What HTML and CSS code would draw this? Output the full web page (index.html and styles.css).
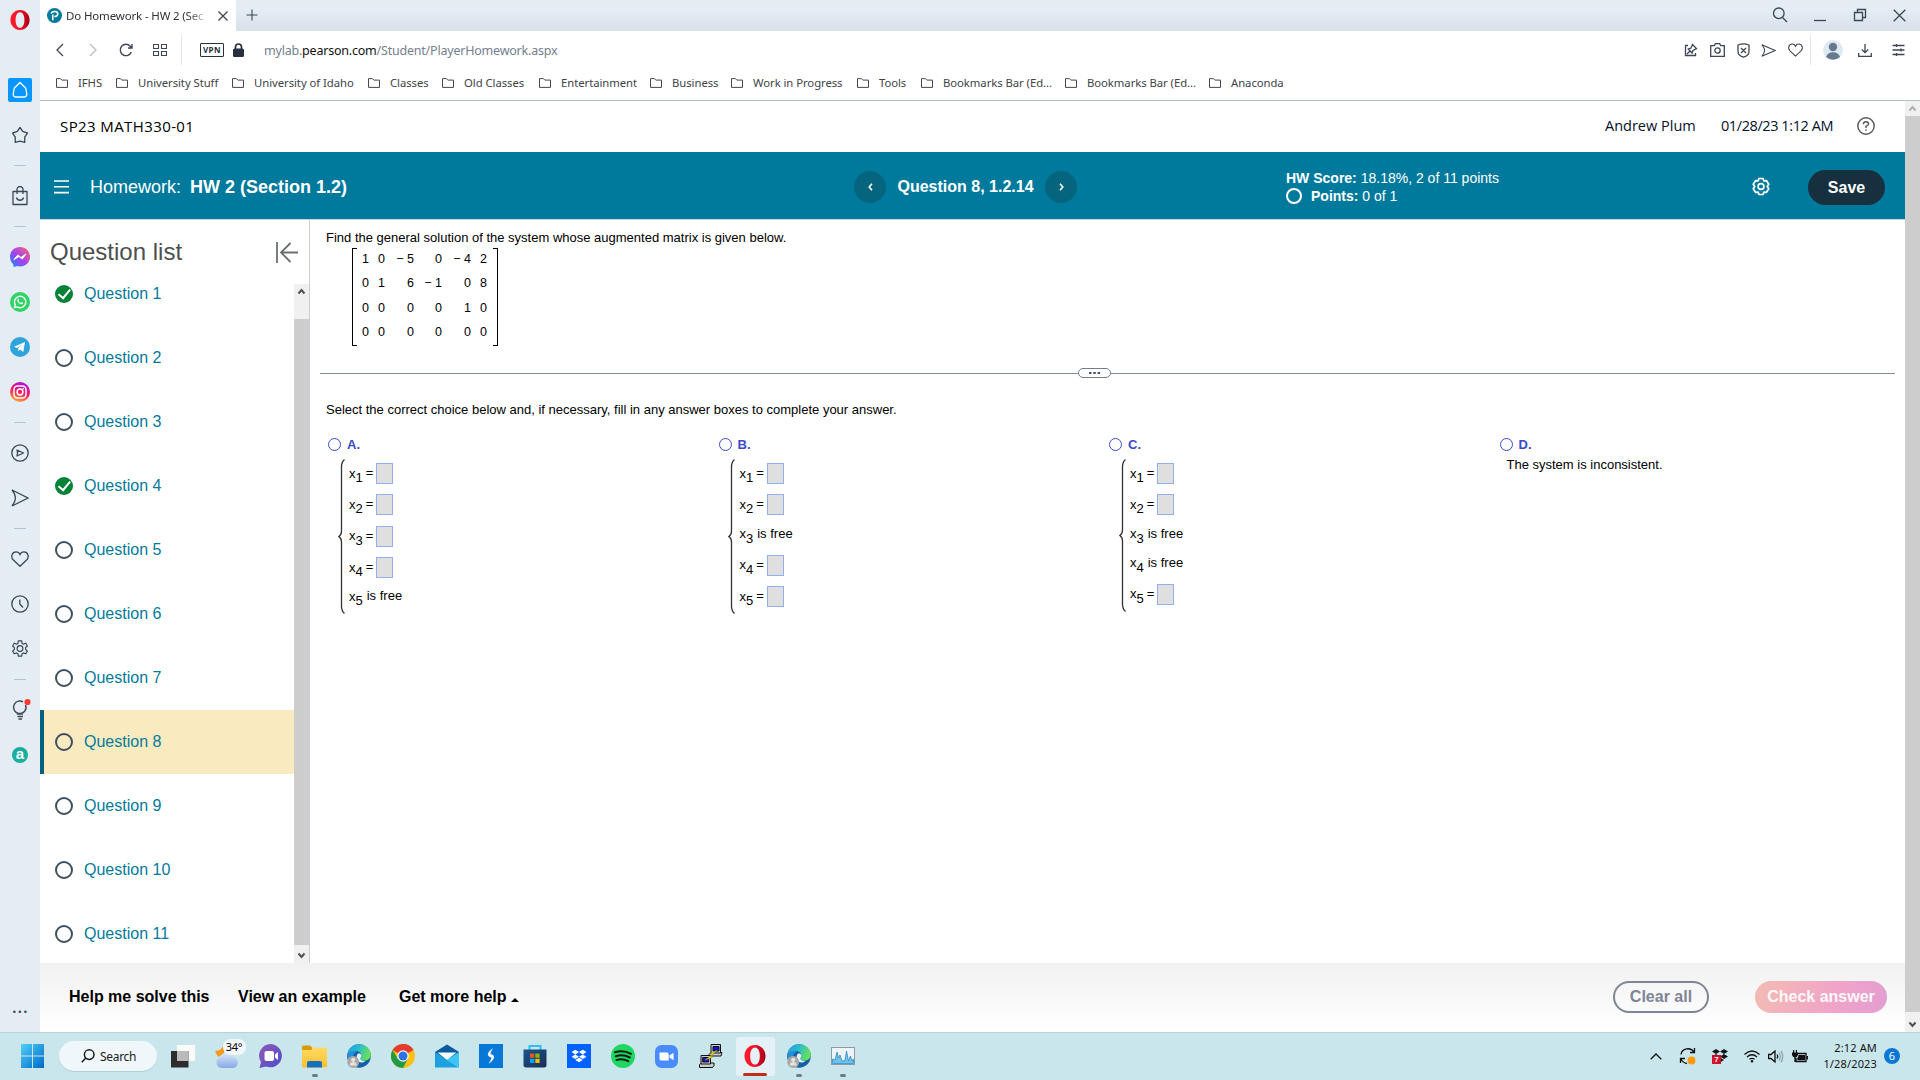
FILE: index.html
```html
<!DOCTYPE html>
<html lang="en">
<head>
<meta charset="utf-8">
<title>Do Homework - HW 2 (Section 1.2)</title>
<link rel="stylesheet" href="styles.css">
</head>
<body>
<svg class="defs" aria-hidden="true">
  <defs>
    <linearGradient id="gOpera" x1="0" x2="1"><stop offset="0" stop-color="#ff1b2d"/><stop offset=".5" stop-color="#f01528"/><stop offset="1" stop-color="#a70014"/></linearGradient>
    <linearGradient id="gMsg" x1="0" y1="1" x2="1" y2="0"><stop offset="0" stop-color="#0a94ff"/><stop offset=".45" stop-color="#a040f8"/><stop offset="1" stop-color="#ff6968"/></linearGradient>
    <linearGradient id="gInsta" x1=".7" y1="0" x2=".3" y2="1"><stop offset="0" stop-color="#a010f0"/><stop offset=".5" stop-color="#ff1560"/><stop offset="1" stop-color="#ffb030"/></linearGradient>
    <linearGradient id="gWin" x1="0" y1="0" x2="1" y2="1"><stop offset="0" stop-color="#4fd0f8"/><stop offset="1" stop-color="#0068c8"/></linearGradient>
    <linearGradient id="gEdge" x1="0" y1="0" x2="1" y2=".3"><stop offset="0" stop-color="#1f9be0"/><stop offset=".5" stop-color="#28bdd0"/><stop offset="1" stop-color="#65e05a"/></linearGradient>
    <linearGradient id="gChat" x1="0" y1="0" x2="1" y2="1"><stop offset="0" stop-color="#9358b8"/><stop offset="1" stop-color="#4a4fc8"/></linearGradient>
    <linearGradient id="gFold" x1="0" y1="0" x2="0" y2="1"><stop offset="0" stop-color="#ffdb66"/><stop offset="1" stop-color="#fcc02c"/></linearGradient>
    <linearGradient id="gCloud" x1="0" y1="0" x2="0" y2="1"><stop offset="0" stop-color="#d8e8fb"/><stop offset="1" stop-color="#87a9e6"/></linearGradient>
    <linearGradient id="gStore" x1="0" y1="0" x2="1" y2="1"><stop offset="0" stop-color="#17558e"/><stop offset="1" stop-color="#1d2d55"/></linearGradient>
    <symbol id="folder" viewBox="0 0 12 10"><path d="M.5 .6H4.4L5.8 2.1H11.5V9.4H.5Z" fill="none" stroke="#45484c"/></symbol>
    <symbol id="opera" viewBox="0 0 20 20"><path fill="url(#gOpera)" fill-rule="evenodd" d="M10 0C15.4 0 19.6 4.4 19.6 10S15.4 20 10 20 .4 15.600 .4 10 4.600 0 10 0ZM10 2.200C7.200 2.200 5.600 5.400 5.600 10S7.200 17.800 10 17.800 14.400 14.600 14.400 10 12.800 2.200 10 2.200Z"/></symbol>
    <symbol id="edge" viewBox="0 0 24 24"><circle cx="12" cy="12" r="11.800" fill="#1660a8"/><path d="M.4 11C1 4.500 6 .2 12 .2c6.500 0 11.800 4.600 11.800 10.200 0 4-3 6.200-6.300 6.200-2.600 0-4.200-1-4.200-2.200 0-1 1.200-1.500 1.200-3C14.500 9 12 7 8.800 7 5 7 1.500 9 .4 11Z" fill="url(#gEdge)"/><path d="M14.500 11.400c0 1.500-1.200 2-1.200 3 0 1.800 2.700 2.700 5.200 2.300-1.700 1.700-4 2.300-6 1.300C9.500 16.500 8.500 12 11 9.500c1.500-.2 3.500.4 3.500 1.900Z" fill="#e4f4f8"/><path d="M.3 11.500C2 8 6.200 6 10 7.200 5.500 8.500 5 16 8.500 19.500L5 21.500C1.500 19 0 15.500.3 11.500Z" fill="#268fd8"/><circle cx="6.200" cy="18" r="6" fill="#a9a9a9"/><circle cx="6.200" cy="15.800" r="2.100" fill="#e8e2dc"/><path d="M2.600 21.500c0-4.600 7.200-4.600 7.200 0Z" fill="#e8e2dc"/></symbol>
    <symbol id="dbx" viewBox="0 0 16 14"><path d="M4 0 8 2.500 4 5 0 2.500ZM12 0 16 2.500 12 5 8 2.500ZM4 5 8 7.500 4 10 0 7.500ZM12 5 16 7.500 12 10 8 7.500ZM8 8.500 12 11 8 13.500 4 11Z"/></symbol>
    <symbol id="plane" viewBox="0 0 18 18"><path d="M1 1 17 9 1 17C5.500 11 5.500 7 1 1Z"/></symbol>
    <symbol id="heart" viewBox="0 0 18 16"><path d="M9 15.300 2.400 9C-.6 6 1 .8 5 .8 7 .8 8.400 2 9 3.400 9.600 2 11 .8 13 .8 17 .8 18.600 6 15.600 9Z"/></symbol>
    <symbol id="gear" viewBox="0 0 20 20"><path d="M8.200 1h3.600l.5 2.700 1.600.9 2.500-1 1.800 3.100-2 1.800v2l2 1.800-1.800 3.100-2.500-1-1.600.9-.5 2.700H8.200l-.5-2.700-1.600-.9-2.500 1-1.800-3.100 2-1.800v-2l-2-1.800 1.800-3.100 2.500 1 1.600-.9Z"/><circle cx="10" cy="9.500" r="3.200"/></symbol>
  </defs>
</svg>
<div class="window">
  <aside class="rail">
    <div class="rail-top"><svg width="20" height="20"><use href="#opera"/></svg></div>
    <div class="ri"><span class="home"><svg class="ln" width="16" height="18" viewBox="0 0 16 18" ><path d="M2.200 7.200 8 1.500 13.800 7.200 14.800 13.500Q14.600 16 12.200 16H3.800Q1.400 16 1.200 13.500Z" stroke="#fff"/></svg></span></div>
    <div class="ri"><svg class="ln" width="18" height="18" viewBox="0 0 18 18"><path d="M9 1.500 11.700 5.300 16.500 7.200 13.700 11.200 13.800 16.300 9 15.200 4.200 16.300 4.300 11.200 1.500 7.200 6.300 5.300Z" stroke-linejoin="round"/></svg></div>
    <div class="sep"></div>
    <div class="ri"><svg class="ln" width="18" height="20" viewBox="0 0 18 20"><path d="M2 5.500H16V18.500H2ZM6 8V3.500a3 3 0 0 1 6 0V8M5.500 11.500a3.600 3.600 0 0 0 7 0" stroke-linejoin="round"/></svg></div>
    <div class="sep"></div>
    <div class="ri"><svg width="20" height="20" viewBox="0 0 20 20"><path d="M10 0c5.700 0 10 4.200 10 9.700S15.700 19.400 10 19.400c-1 0-2-.1-3-.4L3.500 20 3.300 17.200C1.200 15.400 0 12.800 0 9.700 0 4.200 4.300 0 10 0Z" fill="url(#gMsg)"/><path d="M4 12.500 7.800 8 11 10.500 16 7 12.200 12 9 9.500Z" fill="#fff" stroke="#fff" stroke-linejoin="round"/></svg></div>
    <div class="ri"><svg width="20" height="20" viewBox="0 0 20 20"><circle cx="10" cy="10" r="10" fill="#2fd366"/><path d="M4.400 15.600 5.200 12.800A5.700 5.700 0 1 1 7.300 14.900Z" fill="none" stroke="#fff" stroke-width="1.400"/><path d="M7.500 7.200c.8-1 1.200-.3 1.600.8.100.4-.6.700-.4 1.100.5.900 1.200 1.500 2.100 1.900.4.100.7-.9 1.100-.7 1.200.5 1.500.7.900 1.500-1.500 1.800-6.600-2-5.300-4.600Z" fill="#fff"/></svg></div>
    <div class="ri"><svg width="20" height="20" viewBox="0 0 20 20"><circle cx="10" cy="10" r="10" fill="#2fa3dc"/><path d="M4 9.800 15 5 13.300 15 10 12.500 8.500 14.200 8 11.200 12.500 7.500 7 10.900Z" fill="#fff"/></svg></div>
    <div class="ri"><svg width="20" height="20" viewBox="0 0 20 20"><circle cx="10" cy="10" r="10" fill="url(#gInsta)"/><g fill="none" stroke="#fff" stroke-width="1.500"><rect x="4" y="4" width="12" height="12" rx="3.500"/><circle cx="10" cy="10" r="2.900"/></g><circle cx="13.400" cy="6.600" r=".9" fill="#fff"/></svg></div>
    <div class="sep"></div>
    <div class="ri"><svg class="ln" width="18" height="18" viewBox="0 0 18 18"><circle cx="9" cy="9" r="8.200"/><path d="M6 6 12.500 9 6 12Q7.200 9 6 6Z" stroke-linejoin="round"/></svg></div>
    <div class="ri"><svg class="ln" width="18" height="18"><use href="#plane"/></svg></div>
    <div class="sep"></div>
    <div class="ri"><svg class="ln" width="18" height="16"><use href="#heart"/></svg></div>
    <div class="ri"><svg class="ln" width="18" height="18" viewBox="0 0 18 18"><circle cx="9" cy="9" r="8.200"/><path d="M8.800 4.500V9L12 12.500"/></svg></div>
    <div class="ri"><svg class="ln" width="18" height="18"><use href="#gear"/></svg></div>
    <div class="sep"></div>
    <div class="ri"><svg width="22" height="24" viewBox="0 0 22 24"><g fill="none" stroke="#3d4654" stroke-width="1.400"><path d="M14 3.800A6.300 6.300 0 1 0 15.700 13.300 6.300 6.300 0 0 0 16.500 7M8.500 14.500V16H14M8.500 18.500H14M9.500 21H13"/></g><circle cx="18.500" cy="4" r="3.100" fill="#ff3b30"/></svg></div>
    <div class="ri"><span class="badge-a">a</span></div>
    <div class="rail-more">•••</div>
  </aside>
  <div class="browser">
    <div class="tabs">
      <div class="tab"><svg width="15" height="15" viewBox="0 0 15 15"><circle cx="7.500" cy="7.500" r="7.500" fill="#047a9c"/><path d="M5.800 12.300V6.500M4 5.300Q5.200 3.200 8 3.400 11 3.700 10.800 6.200 10.500 8.600 7.300 8.500" fill="none" stroke="#fff" stroke-width="1.500"/></svg><span class="tab-title">Do Homework - HW 2 (Sec</span><svg class="ln" width="10" height="10" viewBox="0 0 10 10"><path d="M.5 .5 9.500 9.500M9.500 .5 .5 9.500"/></svg></div>
      <svg class="ln plus" width="12" height="12" viewBox="0 0 12 12"><path d="M6 .5V11.500M.5 6H11.500" stroke-width="1.100"/></svg>
      <div class="wctl">
        <svg class="ln" width="16" height="16" viewBox="0 0 16 16"><circle cx="6.800" cy="6.300" r="5.300"/><path d="M10.500 10.500 15 15"/></svg>
        <svg class="ln" width="12" height="16" viewBox="0 0 12 16"><path d="M0 13.500H12"/></svg>
        <svg class="ln" width="14" height="14" viewBox="0 0 14 14"><path d="M1.500 4.500H9.500V12.500H1.500ZM4.500 4.500V1.500H12.500V9.500H9.500"/></svg>
        <svg class="ln" width="13" height="13" viewBox="0 0 13 13"><path d="M.7 .7 12.300 12.300M12.300 .7 .7 12.300"/></svg>
      </div>
    </div>
    <div class="address">
      <div class="nav">
        <svg class="ln" width="8" height="14" viewBox="0 0 8 14"><path d="M7 1 1 7 7 13"/></svg>
        <svg class="ln dim" width="8" height="14" viewBox="0 0 8 14"><path d="M1 1 7 7 1 13"/></svg>
        <svg class="ln" width="14" height="14" viewBox="0 0 14 14"><path d="M12.300 9A5.700 5.700 0 1 1 11.300 3.200L13 5M13 1V5H9" stroke-width="1.400"/></svg>
        <svg class="ln" width="14" height="12" viewBox="0 0 14 12"><path d="M.5 .5H5.500V4.500H.5ZM8.500 .5H13.500V4.500H8.500ZM.5 7.500H5.500V11.500H.5ZM8.500 7.500H13.500V11.500H8.500Z" stroke-width="1.100"/></svg>
      </div>
      <div class="vr"></div>
      <span class="vpn">VPN</span>
      <svg class="lock" width="11" height="14" viewBox="0 0 11 14"><rect y="5.500" width="11" height="8.500" rx="1.500" fill="#26303e"/><path d="M2.500 6V4a3 3 0 0 1 6 0V6" fill="none" stroke="#26303e" stroke-width="1.700"/></svg>
      <span class="url">mylab.<b>pearson.com</b>/Student/PlayerHomework.aspx</span>
      <div class="tools">
        <svg class="ln" width="14" height="14" viewBox="0 0 14 14"><path d="M4 2.500H1.500V12.500H11.500V10M8.500 1.500 12.500 5.500 9 7.500 8 10 4.300 6 6.800 5.200ZM6 8 3 11"/></svg>
        <svg class="ln" width="15" height="14" viewBox="0 0 15 14"><path d="M.7 2.700H4.300L5.300 .7H9.700L10.700 2.700H14.300V13.300H.7Z"/><circle cx="7.500" cy="7.500" r="2.700"/></svg>
        <svg class="ln" width="13" height="15" viewBox="0 0 13 15"><path d="M1 2Q6.500-.2 12 2V8.500Q12 12.500 6.500 14.200 1 12.500 1 8.500ZM4 5 9 10M9 5 4 10"/></svg>
        <svg class="ln" width="15" height="13" viewBox="0 0 18 18" preserveAspectRatio="none"><path d="M1 1 17 9 1 17C5.500 11 5.500 7 1 1Z"/></svg>
        <svg class="ln" width="15" height="14"><use href="#heart"/></svg>
      </div>
      <div class="vr"></div>
      <div class="tools2">
        <svg width="20" height="20" viewBox="0 0 20 20"><circle cx="10" cy="10" r="10" fill="#dfe9f3"/><circle cx="10" cy="7" r="4.200" fill="#67798c"/><path d="M3 17Q4.500 12.300 10 12.300T17 17Q10 22.500 3 17Z" fill="#67798c"/></svg>
        <svg class="ln" width="14" height="13" viewBox="0 0 14 13"><path d="M7 0V8.500M3.800 5.500 7 8.700 10.200 5.500M.7 9V12.300H13.300V9"/></svg>
        <svg class="ln" width="13" height="12" viewBox="0 0 13 12"><path d="M.5 1.500H12.500M.5 6H12.500M.5 10.500H12.500M4.500 0V3M9 4.500V7.500M4.500 9V12"/></svg>
      </div>
    </div>
    <div class="bookmarks">
      <span class="bm"><svg><use href="#folder"/></svg>IFHS</span>
      <span class="bm"><svg><use href="#folder"/></svg>University Stuff</span>
      <span class="bm"><svg><use href="#folder"/></svg>University of Idaho</span>
      <span class="bm"><svg><use href="#folder"/></svg>Classes</span>
      <span class="bm"><svg><use href="#folder"/></svg>Old Classes</span>
      <span class="bm"><svg><use href="#folder"/></svg>Entertainment</span>
      <span class="bm"><svg><use href="#folder"/></svg>Business</span>
      <span class="bm"><svg><use href="#folder"/></svg>Work in Progress</span>
      <span class="bm"><svg><use href="#folder"/></svg>Tools</span>
      <span class="bm"><svg><use href="#folder"/></svg>Bookmarks Bar (Ed...</span>
      <span class="bm"><svg><use href="#folder"/></svg>Bookmarks Bar (Ed...</span>
      <span class="bm"><svg><use href="#folder"/></svg>Anaconda</span>
    </div>
    <div class="viewport">
      <div class="page">
        <header class="course">
          <span class="course-name">SP23 MATH330-01</span>
          <span class="user">Andrew Plum</span><span class="date">01/28/23 1:12 AM</span>
          <svg width="18" height="18" viewBox="0 0 18 18" fill="none" stroke="#55585c" stroke-width="1.400"><circle cx="9" cy="9" r="8.200"/><path d="M6.300 7.200Q6.400 4.700 9 4.700T11.600 7Q11.600 8.300 9 9.200V11"/><path d="M9 12.300V13.800"/></svg>
        </header>
        <div class="hwbar">
          <div class="hw-left"><svg width="15" height="14" viewBox="0 0 15 14"><path d="M0 1H15M0 6.800H15M0 12.600H15" stroke="#fff" stroke-width="1.600"/></svg><span class="hw-title">Homework: <b>HW 2 (Section 1.2)</b></span></div>
          <div class="hw-nav"><span class="rnd"><svg width="5" height="8" viewBox="0 0 5 8"><path d="M4 .8 1.200 4 4 7.200"/></svg></span><b>Question 8, 1.2.14</b><span class="rnd"><svg width="5" height="8" viewBox="0 0 5 8"><path d="M1 .8 3.800 4 1 7.200"/></svg></span></div>
          <div class="score"><div><b>HW Score:</b> 18.18%, 2 of 11 points</div><div class="pts"><i></i><span><b>Points:</b> 0 of 1</span></div></div>
          <svg class="cog" width="18" height="19" viewBox="0 0 18 19"><path d="M7 1.500H11L11.800 3.800 14.300 3.600 16.800 7.300 15.200 9.500 16.800 11.700 14.300 15.400 11.800 15.200 11 17.500H7L6.200 15.200 3.700 15.400 1.200 11.700 2.800 9.500 1.200 7.300 3.700 3.600 6.200 3.800Z"/><circle cx="9" cy="9.500" r="2.900"/></svg>
          <span class="save">Save</span>
        </div>
        <div class="body">
          <section class="qpanel">
            <div class="qhead"><span>Question list</span><svg width="22" height="21" viewBox="0 0 22 21"><path d="M1 0V21M5 10.500H22M14.500 1 5 10.500 14.500 20" fill="none" stroke="#6a7070" stroke-width="1.800"/></svg></div>
            <div class="qwrap">
              <div class="qlist">
                <div class="q done"><i></i>Question 1</div>
                <div class="q"><i></i>Question 2</div>
                <div class="q"><i></i>Question 3</div>
                <div class="q done"><i></i>Question 4</div>
                <div class="q"><i></i>Question 5</div>
                <div class="q"><i></i>Question 6</div>
                <div class="q"><i></i>Question 7</div>
                <div class="q cur"><i></i>Question 8</div>
                <div class="q"><i></i>Question 9</div>
                <div class="q"><i></i>Question 10</div>
                <div class="q"><i></i>Question 11</div>
              </div>
              <div class="sb"><svg width="15" height="15" viewBox="0 0 15 15"><path d="M4.500 9.500 7.500 6 10.500 9.500"/></svg><span class="thumb"></span><svg width="15" height="18" viewBox="0 0 15 18"><path d="M4.500 8.500 7.500 12 10.500 8.500"/></svg></div>
            </div>
          </section>
          <main class="work">
            <p class="prompt">Find the general solution of the system whose augmented matrix is given below.</p>
            <div class="matrix">
              <span>1</span><span>0</span><span>− 5</span><span>0</span><span>− 4</span><span>2</span>
              <span>0</span><span>1</span><span>6</span><span>− 1</span><span>0</span><span>8</span>
              <span>0</span><span>0</span><span>0</span><span>0</span><span>1</span><span>0</span>
              <span>0</span><span>0</span><span>0</span><span>0</span><span>0</span><span>0</span>
            </div>
            <div class="split"><hr><svg width="33" height="10" viewBox="0 0 33 10"><rect x=".5" y=".5" width="32" height="9" rx="4.500" fill="#fff" stroke="#737d92"/><path d="M11 4H13.500V6H11ZM15.300 4H17.800V6H15.300ZM19.600 4H22.100V6H19.600Z" fill="#4e5560"/></svg><hr></div>
            <p class="prompt2">Select the correct choice below and, if necessary, fill in any answer boxes to complete your answer.</p>
            <div class="choices">
              <div class="choice"><div class="opt"><i></i><b>A.</b></div><div class="sys"><svg class="brace" width="7" height="155" viewBox="0 0 7 155"><path d="M6.500 .5Q3.500 3 3.500 8V72Q3.500 76 .8 77.500 3.500 79 3.500 83V147Q3.500 152 6.500 154.500"/></svg><div class="eqs">
                <div class="eq">x<sub>1</sub><em>=</em><u></u></div><div class="eq">x<sub>2</sub><em>=</em><u></u></div><div class="eq">x<sub>3</sub><em>=</em><u></u></div><div class="eq">x<sub>4</sub><em>=</em><u></u></div><div class="eq free">x<sub>5</sub><em>is free</em></div></div></div></div>
              <div class="choice"><div class="opt"><i></i><b>B.</b></div><div class="sys"><svg class="brace" width="7" height="155" viewBox="0 0 7 155"><path d="M6.500 .5Q3.500 3 3.500 8V72Q3.500 76 .8 77.500 3.500 79 3.500 83V147Q3.500 152 6.500 154.500"/></svg><div class="eqs">
                <div class="eq">x<sub>1</sub><em>=</em><u></u></div><div class="eq">x<sub>2</sub><em>=</em><u></u></div><div class="eq free">x<sub>3</sub><em>is free</em></div><div class="eq">x<sub>4</sub><em>=</em><u></u></div><div class="eq">x<sub>5</sub><em>=</em><u></u></div></div></div></div>
              <div class="choice"><div class="opt"><i></i><b>C.</b></div><div class="sys"><svg class="brace" width="7" height="153" viewBox="0 0 7 153"><path d="M6.500 .5Q3.500 3 3.500 8V71Q3.500 75 .8 76.500 3.500 78 3.500 82V145Q3.500 150 6.500 152.500"/></svg><div class="eqs">
                <div class="eq">x<sub>1</sub><em>=</em><u></u></div><div class="eq">x<sub>2</sub><em>=</em><u></u></div><div class="eq free">x<sub>3</sub><em>is free</em></div><div class="eq free">x<sub>4</sub><em>is free</em></div><div class="eq">x<sub>5</sub><em>=</em><u></u></div></div></div></div>
              <div class="choice"><div class="opt"><i></i><b>D.</b></div><p class="incon">The system is inconsistent.</p></div>
            </div>
          </main>
        </div>
        <footer class="foot">
          <span class="f1">Help me solve this</span><span class="f2">View an example</span><span class="f3">Get more help</span><span class="caret"></span>
          <span class="clear">Clear all</span><span class="check">Check answer</span>
        </footer>
      </div>
      <div class="sb page-sb"><svg class="off" width="15" height="15" viewBox="0 0 15 15"><path d="M4.500 9.500 7.500 6 10.500 9.500"/></svg><span class="thumb"></span><svg width="15" height="20" viewBox="0 0 15 20"><path d="M4.500 10.500 7.500 14 10.500 10.500"/></svg></div>
    </div>
  </div>
</div>
<div class="taskbar">
  <svg class="start" width="23" height="24" viewBox="0 0 23 24"><path d="M0 0H11V11.500H0ZM12 0H23V11.500H12ZM0 12.500H11V24H0ZM12 12.500H23V24H12Z" fill="url(#gWin)"/></svg>
  <div class="search"><svg width="14" height="14" viewBox="0 0 14 14" fill="none" stroke="#1b1b1b" stroke-width="1.500"><circle cx="8.200" cy="5.600" r="4.800"/><path d="M4.800 9 .8 13.200"/></svg>Search</div>
  <div class="apps">
    <div class="app"><svg width="24" height="24" viewBox="0 0 24 24"><rect x="6" y="1" width="18" height="16" fill="#fafafa"/><path d="M0 7H17.500V23.500H0Z" fill="#2d2d2d"/><path d="M6 7H17.500V17H6Z" fill="#bababa"/></svg></div>
    <div class="app weather"><svg width="24" height="24" viewBox="0 0 24 24"><path d="M0 7 5 6 9 1V10L3 13Z" fill="#f39a1e"/><path d="M6 24a5.500 5.500 0 0 1-1-10.500 6.500 6.500 0 0 1 12.500 0A5.300 5.300 0 0 1 18.500 24Z" fill="url(#gCloud)"/></svg><span class="temp">34°</span></div>
    <div class="app"><svg width="24" height="24" viewBox="0 0 24 24"><path d="M12 0A11.700 11.700 0 1 1 7 22.600L.5 24 2 18A11.700 11.700 0 0 1 12 0Z" fill="url(#gChat)"/><rect x="5.500" y="7" width="9.500" height="10" rx="2" fill="#fff"/><path d="M16 10.500 19 8V16L16 13.500Z" fill="#fff"/></svg></div>
    <div class="app run"><svg width="25" height="24" viewBox="0 0 25 24"><path d="M0 3Q0 1.500 1.500 1.500H8L10.500 4V8H0Z" fill="#d99a00"/><path d="M0 6H9L11 3.500H25V23.500H0Z" fill="url(#gFold)"/><path d="M5 23.500V19Q5 17 7 17H18Q20 17 20 19V23.500Z" fill="#1670c0"/></svg></div>
    <div class="app"><svg width="24" height="24"><use href="#edge"/></svg></div>
    <div class="app"><svg width="24" height="24" viewBox="0 0 24 24"><circle cx="12" cy="12" r="12" fill="#fbc116"/><path d="M12 12 1.600 6A12 12 0 0 1 22.400 6Z" fill="#e33b2e"/><path d="M1.600 6A12 12 0 0 0 12 24L17 14.500 7 15Z" fill="#229a48"/><path d="M12 6H22.400A12 12 0 0 0 12 0Z" fill="#e33b2e"/><circle cx="12" cy="12" r="5.700" fill="#fff"/><circle cx="12" cy="12" r="4.500" fill="#2f72e4"/></svg></div>
    <div class="app"><svg width="24" height="24" viewBox="0 0 24 24"><path d="M0 8 12 .5 24 8V14H0Z" fill="#075a9e"/><path d="M2.500 8.500H21.500L12 16Z" fill="#f8fbfd"/><path d="M0 8 24 23.500H0Z" fill="#1ea0e0"/><path d="M24 8V23.500L11.500 16Z" fill="#3cc6f5"/></svg></div>
    <div class="app"><svg width="24" height="24" viewBox="0 0 24 24"><rect width="24" height="24" fill="#0878d8"/><path d="M13.500 4.500Q9 8 9 10.200T12.700 13.500Q12 16.500 10 19.300 14.700 16 14.900 13.300T11.300 10.200Q11.500 8 13.500 4.500Z" fill="#fff" stroke="#fff" stroke-width=".3"/></svg></div>
    <div class="app"><svg width="24" height="24" viewBox="0 0 24 24"><path d="M6.500 6V2H17.500V6" fill="none" stroke="#2cc0f0" stroke-width="2"/><path d="M.5 5.500H23.500V21Q23.500 23.500 21 23.500H3Q.5 23.500 .5 21Z" fill="url(#gStore)"/><path d="M7 9.500H11.300V13.800H7Z" fill="#f25022"/><path d="M12.300 9.500H16.600V13.800H12.300Z" fill="#7fba00"/><path d="M7 14.800H11.300V19H7Z" fill="#00a4ef"/><path d="M12.300 14.800H16.600V19H12.300Z" fill="#ffb900"/></svg></div>
    <div class="app"><svg width="24" height="24" viewBox="0 0 24 24"><rect width="24" height="24" fill="#0061fe"/><use href="#dbx" x="4.500" y="5.500" width="15" height="13.500" fill="#fff"/></svg></div>
    <div class="app"><svg width="24" height="24" viewBox="0 0 24 24"><circle cx="12" cy="12" r="12" fill="#1ed760"/><path d="M4 8.200Q12.500 5.800 20 9.800M4.800 12.200Q12 10 18.800 13.500M5.500 16Q11.800 14.300 17.300 17.200" fill="none" stroke="#111b14" stroke-width="2" stroke-linecap="round"/></svg></div>
    <div class="app"><svg width="23" height="23" viewBox="0 0 23 23"><rect width="23" height="23" rx="6.500" fill="#4a8cff"/><path d="M4.500 7.500H12Q13.700 7.500 13.700 9.200V15.500H6.200Q4.500 15.500 4.500 13.800ZM14.500 10.500 18.500 7.800V15.200L14.500 12.500Z" fill="#fff"/></svg></div>
    <div class="app"><svg width="24" height="24" viewBox="0 0 24 24"><g stroke="#111" stroke-width="1"><path d="M10 10.500 12 8.500H23L22 12H10Z" fill="#ccc"/><path d="M12 .5H21.500V9H12Z" fill="#ccc"/><path d="M14 2.500H20V7H14Z" fill="#0c12dc"/><path d="M.5 23.500V20.500L2.500 19H15V21.500L13.500 23.500Z" fill="#ccc"/><path d="M2 11.500H11.500V20H2Z" fill="#ccc"/><path d="M3.700 13.500H9.700V18H3.700Z" fill="#0c12dc"/></g><path d="M18 6.500 12 9 13.500 11 6 16 13 13.500 12 11.500Z" fill="#f7ee00" stroke="#a89b00" stroke-width=".6"/></svg></div>
    <div class="app active"><svg width="22" height="22"><use href="#opera"/></svg></div>
    <div class="app run"><svg width="24" height="24"><use href="#edge"/></svg></div>
    <div class="app run"><svg width="24" height="18" viewBox="0 0 24 18"><rect x=".5" y=".5" width="23" height="17" fill="#eef4f8" stroke="#8d9aa5"/><path d="M1.500 16.500V12L4 13 6 5 7.500 11 9 8 11 14 14 13.500 15.500 4 17.500 14 19.500 9 21 14 22.500 12V16.500Z" fill="#6fc0ea" stroke="#2f8ec8" stroke-width=".8"/></svg></div>
  </div>
  <div class="tray">
    <svg width="12" height="7" viewBox="0 0 12 7" class="tk"><path d="M.7 6.300 6 1 11.300 6.300"/></svg>
    <svg width="18" height="18" viewBox="0 0 18 18" class="tk"><path d="M2 7.500A7 6.500 0 0 1 15 5M15.500 1V5.500H11M1.500 16V11.500H6M2 12Q4 16 8 16.500"/><circle cx="12.500" cy="13.500" r="4" fill="#ff9a0c" stroke="none"/></svg>
    <span class="dtray"><svg width="16" height="14" fill="#14181a"><use href="#dbx"/></svg><b>7</b></span>
    <svg width="16" height="13" viewBox="0 0 16 13" class="tk"><path d="M.5 4.500Q8-2.500 15.500 4.500M3 7Q8 2.500 13 7M5.500 9.300Q8 7.300 10.500 9.300"/><circle cx="8" cy="11.300" r="1.200" fill="#111" stroke="none"/></svg>
    <svg width="16" height="13" viewBox="0 0 16 13" class="tk"><path d="M.6 4.500H3L7 1V12L3 8.500H.6ZM9 4.500Q10.300 6.500 9 8.500"/><path d="M11 2.500Q13.500 6.500 11 10.500M13 .8Q16.500 6.500 13 12.200" stroke="#8fa3aa"/></svg>
    <svg width="16" height="13" viewBox="0 0 16 13" class="tk"><path d="M5 3.500H14V11.500H4V8M3 7V12"/><path d="M6.500 5H13V10.200H5.300V8Q6.500 7 6.500 5ZM0 2.500H6V5Q5 7.500 3 7.500T0 5ZM1 0H2.200V3H1ZM3.800 0H5V3H3.800ZM14.500 6H16V9.500H14.500Z" fill="#111" stroke="none"/></svg>
    <div class="clock"><span>2:12 AM</span><span>1/28/2023</span></div>
    <span class="notif">6</span>
  </div>
</div>
</body>
</html>
```
FILE: styles.css
```css
* { box-sizing: border-box; }
body { margin: 0; width: 1920px; height: 1080px; overflow: hidden; display: flex; flex-direction: column; font-family: "Liberation Sans", Arial, sans-serif; color: #000; background: #fff; }
p { margin: 0; }
svg { display: block; flex: none; }
.defs { position: absolute; width: 0; height: 0; }
.window { display: flex; height: 1032px; }
.ln { fill: none; stroke: #3d4654; stroke-width: 1.3; }
.dim { stroke: #b9bcc0; }

.rail { width: 40px; background: #e4ecf4; display: flex; flex-direction: column; }
.rail-top { height: 67px; padding: 10px 0 0 10px; }
.ri { height: 45px; display: flex; align-items: center; justify-content: center; }
.ri svg.ln { margin-right: 1px; }
.home { width: 24px; height: 24px; border-radius: 2px; background: #0a96ff; display: flex; align-items: center; justify-content: center; }
.home svg.ln { margin: 0; }
.sep { height: 16px; display: flex; align-items: center; justify-content: center; }
.sep::before { content: ""; width: 12px; height: 1px; background: #b3c3d2; }
.badge-a { width: 16px; height: 16px; border-radius: 50%; background: #1aae9f; color: #fff; font: bold 15px/13px "Liberation Sans", sans-serif; text-align: center; }
.rail-more { margin: auto 0 12px; font-size: 9px; line-height: 16px; letter-spacing: 2.4px; text-align: center; padding-left: 2px; color: #3d4654; }

.browser { width: 1880px; display: flex; flex-direction: column; }
.tabs { height: 31px; display: flex; align-items: center; background: linear-gradient(#e4ecf4 30%, #d8e0e9); }
.tab { width: 196px; height: 31px; background: #fff; display: flex; align-items: center; padding: 0 8px 0 7px; font: 11.5px "Noto Sans", sans-serif; color: #2f3338; }
.tab-title { width: 144px; margin: 0 8px 0 4px; white-space: nowrap; letter-spacing: -.15px; -webkit-mask-image: linear-gradient(90deg, #000 84%, transparent 101%); mask-image: linear-gradient(90deg, #000 84%, transparent 101%); }
.plus { margin-left: 10px; margin-top: -2px; }
.wctl { margin-left: auto; display: flex; align-items: center; justify-content: space-between; width: 134px; margin-right: 14px; margin-top: -1px; }
.address { height: 38px; display: flex; align-items: center; }
.nav { width: 141px; display: flex; align-items: center; padding-left: 16px; gap: 25px; }
.nav svg:nth-child(3) { margin-left: -3px; }
.nav svg:nth-child(4) { margin-left: -5px; }
.vr { width: 1px; height: 30px; background: #e2e5e9; }
.vpn { margin-left: 18px; width: 24px; height: 14px; border: 1px solid #26303e; border-radius: 1px; font: bold 8px/12px "Noto Sans", sans-serif; letter-spacing: .5px; text-align: center; color: #26303e; }
.lock { margin: 0 20px 0 9px; }
.url { font: 12.5px/20px "Noto Sans", sans-serif; letter-spacing: -.21px; padding-top: 1px; color: #74808e; }
.url b { font-weight: 400; color: #111; }
.tools { margin-left: auto; display: flex; align-items: center; gap: 11.7px; margin-right: 7px; }
.tools2 { display: flex; align-items: center; width: 109px; padding-left: 12px; gap: 15px; }
.tools2 svg:nth-child(3) { margin-left: 5px; }
.bookmarks { height: 32px; padding: 0 0 4px 16px; border-bottom: 1px solid #b0bfcc; display: grid; grid-template-columns: 60px 116px 136px 74px 97px 111px 81px 126px 64px 144px 144px 80px; align-items: center; font: 11.3px "Noto Sans", sans-serif; letter-spacing: -.05px; color: #404347; }
.bm { display: flex; align-items: center; gap: 10px; white-space: nowrap; }
.bm svg { width: 12px; height: 10px; }
.viewport { height: 931px; display: flex; }
.page { width: 1865px; display: flex; flex-direction: column; }

.course { height: 51px; display: flex; align-items: center; padding: 0 30px 2px 20px; font: 14.5px "Open Sans", sans-serif; color: #05112a; }
.course svg { margin-top: 1px; }
.course-name { color: #000; font-size: 15px; letter-spacing: .4px; }
.user { margin-left: auto; width: 92px; white-space: nowrap; }
.date { width: 112px; margin: 0 24px; white-space: nowrap; letter-spacing: -.42px; }
.hwbar { height: 68px; padding-top: 3px; background: #007a9c; color: #fff; border-bottom: 1px solid #c7d3e3; display: grid; grid-template-columns: 814px 432px 467px 55px 77px; align-items: center; }
.hw-left { display: flex; align-items: center; padding-left: 14px; }
.hw-title { margin-left: 21px; font-size: 18px; white-space: pre; }
.hw-title b { margin-left: 4px; }
.hw-nav { display: flex; align-items: center; font-size: 16px; }
.hw-nav b { width: 159px; text-align: center; }
.rnd { width: 32px; height: 32px; border-radius: 50%; background: #05657f; display: flex; align-items: center; justify-content: center; }
.rnd path { fill: none; stroke: #fff; stroke-width: 1.6; }
.score { font-size: 14px; line-height: 18px; }
.pts { display: flex; align-items: center; gap: 9px; }
.pts i { width: 16px; height: 16px; border: 2px solid #fff; border-radius: 50%; }
.cog { fill: none; stroke: #fff; stroke-width: 1.7; stroke-linejoin: round; margin: -2px 0 0 -1px; }
.save { height: 35px; border-radius: 18px; background: #16303f; font: bold 16px/35px "Liberation Sans", sans-serif; text-align: center; }

.body { height: 743px; display: flex; }
.qpanel { width: 270px; border-right: 1px solid #c7cddd; display: flex; flex-direction: column; }
.qhead { height: 64px; padding: 0 11px 0 10px; display: flex; align-items: center; justify-content: space-between; font-size: 24px; color: #4d4f4f; }
.qwrap { height: 679px; display: flex; }
.qlist { flex: 1; overflow: hidden; }
.q { height: 64px; display: flex; align-items: center; gap: 11px; padding-left: 15px; font-size: 16px; color: #047a9c; }
.q:first-child { margin-top: -22px; }
.q i { width: 18px; height: 18px; border: 2px solid #404f5f; border-radius: 50%; }
.q.done i { border: 0; background: #038238; display: flex; align-items: center; justify-content: center; }
.q.done i::after { content: ""; width: 5px; height: 10px; border: solid #fff; border-width: 0 2px 2px 0; transform: rotate(40deg) translate(-1px, -1px); }
.q.cur { background: #f9ebbf; border-left: 4px solid #05617c; padding-left: 11px; }
.sb { width: 15px; background: #f0f0f0; display: flex; flex-direction: column; }
.sb path { fill: none; stroke: #505050; stroke-width: 2; }
.sb .off path { stroke: #b0b0b0; }
.thumb { flex: 1; margin-top: 20px; background: #cdcdcd; }
.page-sb .thumb { margin-top: 0; }

.work { flex: 1; padding: 9px 10px 0; font-size: 13px; }
.prompt, .prompt2 { padding-left: 6px; line-height: 18px; }
.matrix { margin: 1px 0 0 32px; width: 146px; height: 98px; padding: 0 10px 0 9px; display: grid; grid-template-columns: 8px 16px 29px 28px 29px 16px; grid-auto-rows: 24.4px; line-height: 22px; text-align: right; white-space: nowrap; background: linear-gradient(#000, #000) 0 0/1px 100%, linear-gradient(#000, #000) 0 0/5px 1px, linear-gradient(#000, #000) 0 100%/5px 1px, linear-gradient(#000, #000) 100% 0/1px 100%, linear-gradient(#000, #000) 100% 0/5px 1px, linear-gradient(#000, #000) 100% 100%/5px 1px; background-repeat: no-repeat; }
.matrix span { font-size: 12.5px; }
.split { display: flex; align-items: center; height: 10px; margin-top: 22px; }
.split hr { flex: 1; height: 1px; border: 0; margin: 0; background: #828a94; }
.split hr:first-child { flex: none; width: 758px; }
.prompt2 { margin-top: 23px; }
.choices { display: grid; grid-template-columns: repeat(4, 390.5px); width: 1573px; padding-left: 8px; margin-top: 18px; }
.opt { display: flex; align-items: center; gap: 6px; height: 15px; color: #3a4bc8; font-size: 13px; }
.opt i { width: 13px; height: 13px; border: 1px solid #3a4bc8; border-radius: 50%; }
.sys { display: flex; margin: 6px 0 0 9.5px; }
.brace { margin-top: 1px; }
.brace path { fill: none; stroke: #333; stroke-width: 1.3; }
.eqs { padding-left: 4.5px; }
.eq { height: 31.3px; display: flex; align-items: center; line-height: 14px; }
.eq.free { height: 29px; padding-bottom: 2px; }
.eq sub { font-size: 13px; line-height: 14px; margin-top: 9px; vertical-align: baseline; }
.eq em { font-style: normal; margin: -1px 0 0 3px; }
.eq.free em { margin-left: 4px; }
.eq u { width: 17px; height: 21px; margin-left: 3px; background: #dfdfdf; border: 1px solid #93afe8; }
.incon { padding-left: 7px; line-height: 25px; }

.foot { height: 69px; background: linear-gradient(#f1f1f1, #fff); display: flex; align-items: center; padding: 0 18px 1px 29px; font-weight: bold; font-size: 16px; }
.f1 { width: 169px; }
.f2 { width: 161px; }
.f3 { width: 112px; }
.caret { border: solid transparent; border-width: 0 4px 4px; border-bottom-color: #000; margin-top: 5px; }
.clear { margin-left: auto; width: 96px; height: 32px; border: 2px solid #7d8596; border-radius: 16px; line-height: 28px; color: #7d8596; text-align: center; }
.check { margin-left: 46px; width: 132px; height: 32px; border-radius: 16px; line-height: 32px; text-align: center; color: #fff8fb; background: linear-gradient(110deg, #f3bcb2, #f0a4c8 60%, #e29ed2); }

.taskbar { height: 48px; padding-bottom: 1px; background: #cae6ed; border-top: 1px solid #b5d3da; display: flex; align-items: center; }
.start { margin-left: 21px; }
.search { margin-left: 15px; width: 98px; height: 30px; border-radius: 15px; background: #f0f7fa; box-shadow: 0 1px 1px #b2ccd3; display: flex; align-items: center; gap: 5px; padding-left: 22px; font: 12px "Noto Sans", sans-serif; letter-spacing: -.3px; color: #1b1b1b; }
.apps { display: flex; margin-left: 3.5px; }
.app { width: 44px; height: 46px; display: flex; align-items: center; justify-content: center; position: relative; }
.app.run::after { content: ""; position: absolute; bottom: 2px; left: 19px; width: 6px; height: 3px; border-radius: 2px; background: #6e7c82; }
.app.active::before { content: ""; position: absolute; inset: 4px 2px 3px 3px; border-radius: 3px; background: #e4f1f6; }
.app.active::after { content: ""; position: absolute; bottom: 3px; left: 10px; width: 24px; height: 3px; border-radius: 2px; background: #c42b1c; }
.app.active svg { position: relative; }
.temp { position: absolute; left: 18px; top: 6px; width: 23px; height: 16px; border-radius: 8px; background: #f3f8fa; font: 11px/16px "Noto Sans", sans-serif; letter-spacing: -.3px; text-align: center; }
.tray { margin-left: auto; display: flex; align-items: center; padding-right: 20px; }
.tk { fill: none; stroke: #111; stroke-width: 1.3; }
.tray svg:nth-of-type(2) { margin-left: 17px; }
.dtray { margin: 0 16px 0 15px; position: relative; }
.dtray b { position: absolute; left: 0; top: 6px; width: 9px; height: 9px; background: #d40f2c; color: #fff; font-size: 8px; line-height: 9px; text-align: center; }
.tray svg:nth-of-type(4) { margin-left: 8px; }
.tray svg:nth-of-type(5) { margin-left: 8px; }
.clock { width: 69px; display: flex; flex-direction: column; text-align: right; font: 11px/16px "Noto Sans", sans-serif; letter-spacing: .15px; color: #151515; white-space: nowrap; }
.notif { margin-left: 7px; width: 16px; height: 16px; border-radius: 50%; background: #0878d4; color: #fff; font: 11px/16px "Noto Sans", sans-serif; text-align: center; }
```
